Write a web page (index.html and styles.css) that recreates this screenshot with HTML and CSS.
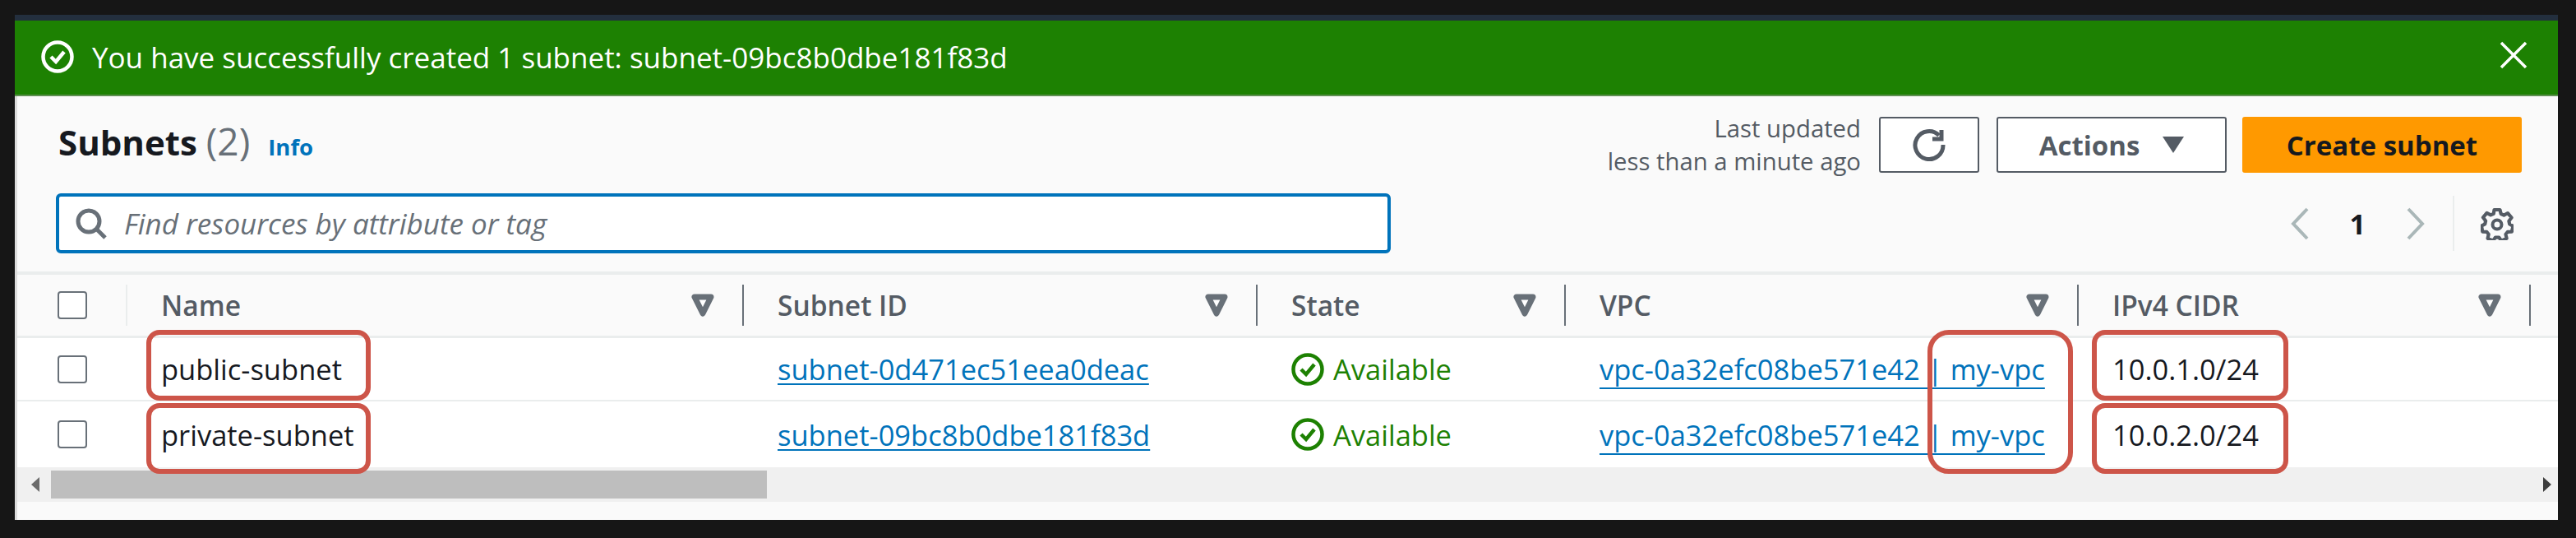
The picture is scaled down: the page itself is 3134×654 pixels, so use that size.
FILE: index.html
```html
<!DOCTYPE html>
<html lang="en">
<head>
<meta charset="utf-8">
<title>Subnets</title>
<link rel="stylesheet" href="styles.css">
</head>
<body>
<div class="frame">
  <div class="nav-strip"></div>
  <div class="banner">
    <svg class="ico-status" viewBox="0 0 40 40"><circle cx="20" cy="20" r="17.500" fill="none" stroke="#fff" stroke-width="4.500"/><path d="M12 20l6 6 10-12" fill="none" stroke="#fff" stroke-width="4.500"/></svg>
    <span class="banner-text">You have successfully created 1 subnet: subnet-09bc8b0dbe181f83d</span>
    <svg class="ico-close" viewBox="0 0 34 34"><path d="M2 2l30 30M32 2L2 32" fill="none" stroke="#fff" stroke-width="3.500"/></svg>
  </div>
  <div class="panel">
    <div class="head-row">
      <h1 class="title">Subnets <span class="count">(2)</span></h1>
      <a class="info">Info</a>
      <div class="updated">Last updated<br>less than a minute ago</div>
      <button class="btn btn-refresh"><svg class="ico-refresh" viewBox="0 0 42 42"><path d="M33 9.500A17 17 0 1 0 38 21" fill="none" stroke="#545b64" stroke-width="5"/><path d="M36 3v11H25" fill="none" stroke="#545b64" stroke-width="5"/></svg></button>
      <button class="btn btn-actions">Actions<svg class="ico-caret" viewBox="0 0 26 20"><path d="M0 0h26L13 20z" fill="#545b64"/></svg></button>
      <button class="btn btn-primary">Create subnet</button>
    </div>
    <div class="tool-row">
      <div class="search">
        <svg class="ico-search" viewBox="0 0 38 38"><circle cx="16" cy="16" r="13" fill="none" stroke="#687078" stroke-width="5"/><path d="M25 25l11 11" stroke="#687078" stroke-width="5"/></svg>
        <span class="placeholder">Find resources by attribute or tag</span>
      </div>
      <div class="pager">
        <svg class="ico-chev" viewBox="0 0 24 40"><path d="M21 2L4 20l17 18" fill="none" stroke="#aab7b8" stroke-width="4"/></svg>
        <span class="page-num">1</span>
        <svg class="ico-chev" viewBox="0 0 24 40"><path d="M3 2l17 18L3 38" fill="none" stroke="#aab7b8" stroke-width="4"/></svg>
      </div>
      <div class="gear-wrap">
        <svg class="ico-gear" viewBox="0 0 40 40"><path d="M16.500 3h7l1.200 5 3.600 1.600 4.700-2.500 4.600 5.400-3.200 4.200.8 3.800 4.300 2.300-1.600 6.800-5 .2-2.400 3 1.100 5-6.400 2.900-3-4.100h-4.200l-3 4.100-6.400-2.900 1.100-5-2.400-3-5-.2L1 22.600l4.300-2.300.8-3.800-3.200-4.200 4.600-5.400 4.700 2.500 3.600-1.600z" fill="none" stroke="#545b64" stroke-width="4.200" stroke-linejoin="round"/><circle cx="20" cy="21" r="5.500" fill="none" stroke="#545b64" stroke-width="4"/></svg>
      </div>
    </div>
    <table class="grid">
      <colgroup>
        <col class="c-check"><col class="c-name"><col class="c-subnet"><col class="c-state"><col class="c-vpc"><col class="c-cidr"><col>
      </colgroup>
      <thead>
        <tr>
          <th><div class="th-in th-check"><span class="box"></span></div></th>
          <th><div class="th-in">Name<svg class="ico-filter" viewBox="0 0 28 28"><path d="M4 4h20L14 24z" fill="#fff" stroke="#687078" stroke-width="7" stroke-linejoin="round"/></svg></div></th>
          <th><div class="th-in">Subnet ID<svg class="ico-filter" viewBox="0 0 28 28"><path d="M4 4h20L14 24z" fill="#fff" stroke="#687078" stroke-width="7" stroke-linejoin="round"/></svg></div></th>
          <th><div class="th-in">State<svg class="ico-filter" viewBox="0 0 28 28"><path d="M4 4h20L14 24z" fill="#fff" stroke="#687078" stroke-width="7" stroke-linejoin="round"/></svg></div></th>
          <th><div class="th-in">VPC<svg class="ico-filter" viewBox="0 0 28 28"><path d="M4 4h20L14 24z" fill="#fff" stroke="#687078" stroke-width="7" stroke-linejoin="round"/></svg></div></th>
          <th><div class="th-in">IPv4 CIDR<svg class="ico-filter" viewBox="0 0 28 28"><path d="M4 4h20L14 24z" fill="#fff" stroke="#687078" stroke-width="7" stroke-linejoin="round"/></svg></div></th>
          <th></th>
        </tr>
      </thead>
      <tbody>
        <tr class="r1">
          <td class="td-check"><span class="box"></span></td>
          <td>public-subnet</td>
          <td><a class="link">subnet-0d471ec51eea0deac</a></td>
          <td><span class="avail"><svg class="ico-status" viewBox="0 0 40 40"><circle cx="20" cy="20" r="17.500" fill="none" stroke="#1d8102" stroke-width="4.500"/><path d="M12 20l6 6 10-12" fill="none" stroke="#1d8102" stroke-width="4.500"/></svg>Available</span></td>
          <td><a class="link link-vpc">vpc-0a32efc08be571e42 | my-vpc</a></td>
          <td>10.0.1.0/24</td>
          <td></td>
        </tr>
        <tr class="r2">
          <td class="td-check"><span class="box"></span></td>
          <td>private-subnet</td>
          <td><a class="link">subnet-09bc8b0dbe181f83d</a></td>
          <td><span class="avail"><svg class="ico-status" viewBox="0 0 40 40"><circle cx="20" cy="20" r="17.500" fill="none" stroke="#1d8102" stroke-width="4.500"/><path d="M12 20l6 6 10-12" fill="none" stroke="#1d8102" stroke-width="4.500"/></svg>Available</span></td>
          <td><a class="link link-vpc">vpc-0a32efc08be571e42 | my-vpc</a></td>
          <td>10.0.2.0/24</td>
          <td></td>
        </tr>
      </tbody>
    </table>
    <div class="scroll-track">
      <span class="arrow arrow-l"></span>
      <div class="thumb"></div>
      <span class="arrow arrow-r"></span>
    </div>
  </div>
  <div class="mark m-name1"></div>
  <div class="mark m-name2"></div>
  <div class="mark m-vpc"></div>
  <div class="mark m-cidr1"></div>
  <div class="mark m-cidr2"></div>
</div>
</body>
</html>
```

FILE: styles.css
```css
* { box-sizing: border-box; }
html, body { margin: 0; padding: 0; }
body {
  background: #161616;
  padding: 18px 22px 22px 18px;
  height: 654px;
  font-family: "Open Sans", "Noto Sans", sans-serif;
  color: #16191f;
  overflow: hidden;
}
.frame {
  position: relative;
  height: 614px;
  display: flex;
  flex-direction: column;
  background: #f2f3f3;
}
.nav-strip { height: 7px; background: #232f3e; flex: none; }
.banner {
  flex: none;
  height: 92px;
  background: #1d8102;
  display: flex;
  align-items: center;
  padding: 0 37px 2px 32px;
  color: #fff;
  border-bottom: 2px solid #5d8f50;
}
.banner-text { font-size: 35px; margin-left: 22px; flex: 1; }
.ico-status { width: 40px; height: 40px; flex: none; }
.ico-close { width: 34px; height: 34px; flex: none; margin-bottom: 4px; }
.panel {
  flex: 1;
  display: flex;
  flex-direction: column;
  border-left: 3px solid #dcdcdc;
  background: #fafafa;
}
.head-row {
  display: flex;
  align-items: center;
  height: 68px;
  margin-top: 25px;
  padding: 0 44px 0 50px;
  flex: none;
}
.title { margin: 0 0 10px; font-size: 42px; font-weight: 700; }
.count { font-size: 46px; font-weight: 400; color: #687078; }
.info { margin: 4px 0 0 22px; font-size: 27.500px; font-weight: 700; color: #0073bb; }
.updated {
  margin-left: auto;
  text-align: right;
  font-size: 29.300px;
  line-height: 40px;
  color: #545b64;
  margin-right: 22px;
}
.btn {
  height: 68px;
  border-radius: 3px;
  font-family: inherit;
  font-size: 33px;
  font-weight: 700;
  background: #fff;
  border: 2px solid #545b64;
  color: #545b64;
  display: flex;
  align-items: center;
  justify-content: center;
  padding: 0;
}
.btn-refresh { width: 122px; }
.ico-refresh { width: 42px; height: 42px; }
.btn-actions { width: 280px; margin-left: 21px; gap: 28px; }
.ico-caret { width: 26px; height: 20px; }
.btn-primary {
  width: 340px;
  margin-left: 19px;
  background: #ff9900;
  border-color: #ff9900;
  color: #16191f;
}
.tool-row {
  display: flex;
  align-items: center;
  height: 73px;
  margin-top: 25px;
  padding: 0 54px 0 47px;
  flex: none;
}
.search {
  width: 1624px;
  height: 73px;
  background: #fff;
  border: 4px solid #0073bb;
  border-radius: 6px;
  display: flex;
  align-items: center;
  padding-left: 20px;
  gap: 21px;
}
.ico-search { width: 38px; height: 38px; flex: none; }
.placeholder { font-size: 35px; font-style: italic; color: #687078; }
.pager {
  margin-left: auto;
  display: flex;
  align-items: center;
  gap: 49px;
}
.ico-chev { width: 24px; height: 40px; }
.page-num { font-size: 34px; font-weight: 700; }
.gear-wrap {
  margin-left: 33px;
  height: 67px;
  padding-left: 32px;
  border-left: 2px solid #eaeded;
  display: flex;
  align-items: center;
}
.ico-gear { width: 40px; height: 40px; }
.grid {
  margin-top: 22px;
  width: 3091px;
  table-layout: fixed;
  border-collapse: separate;
  border-spacing: 0;
  flex: none;
  font-size: 34.500px;
}
.c-check { width: 134px; }
.c-name { width: 750px; }
.c-subnet { width: 625px; }
.c-state { width: 375px; }
.c-vpc { width: 624px; }
.c-cidr { width: 550px; }
th {
  height: 81px;
  padding: 0;
  background: #fafafa;
  border-top: 4px solid #eaeded;
  border-bottom: 3px solid #eaeded;
  text-align: left;
  font-size: 33.500px;
  font-weight: 600;
  color: #545b64;
}
.th-in {
  height: 50px;
  display: flex;
  align-items: center;
  justify-content: space-between;
  padding: 0 34px 0 41px;
  border-right: 2px solid #687078;
}
.th-check { padding: 0 0 0 49px; border-right-color: #eaeded; justify-content: flex-start; }
.ico-filter { width: 28px; height: 28px; flex: none; }
.box {
  display: block;
  width: 36px;
  height: 34px;
  background: #fff;
  border: 2px solid #687078;
  border-radius: 4px;
}
td {
  height: 77px;
  padding: 0 0 0 41px;
  background: #fff;
  color: #16191f;
  white-space: nowrap;
}
.r1 td { border-bottom: 2px solid #eaeded; }
.r2 td { height: 80px; }
td.td-check { padding-left: 49px; }
.link { color: #0073bb; text-decoration: underline; text-decoration-thickness: 2px; text-underline-offset: 4px; text-decoration-skip-ink: none; }
.link-vpc { text-underline-offset: 9px; }
.avail { display: flex; align-items: center; gap: 11px; color: #1d8102; }
.scroll-track {
  position: relative;
  height: 42px;
  background: #f0f0f0;
  flex: none;
  display: flex;
  align-items: center;
  justify-content: space-between;
  padding: 0 8px 0 17px;
}
.thumb { position: absolute; left: 41px; top: 4px; width: 871px; height: 34px; background: #bebebe; }
.arrow { width: 0; height: 0; border-style: solid; }
.arrow-l { border-width: 9px 10px 9px 0; border-color: transparent #6b6b6b transparent transparent; }
.arrow-r { border-width: 9px 0 9px 10px; border-color: transparent transparent transparent #3d3d3d; }
.mark {
  position: absolute;
  border: 6px solid #cd5549;
  border-radius: 16px;
}
.m-name1 { left: 160px; top: 383px; width: 273px; height: 86px; }
.m-name2 { left: 160px; top: 472px; width: 273px; height: 86px; }
.m-vpc { left: 2327px; top: 383px; width: 177px; height: 175px; border-radius: 26px; }
.m-cidr1 { left: 2527px; top: 383px; width: 239px; height: 86px; }
.m-cidr2 { left: 2527px; top: 472px; width: 239px; height: 86px; }
```
